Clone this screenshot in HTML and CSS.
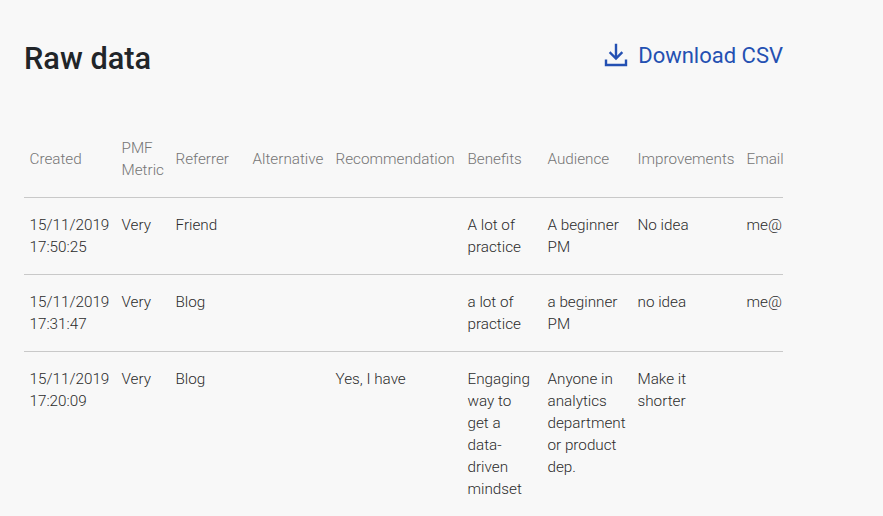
FILE: index.html
```html
<!DOCTYPE html>
<html lang="en">
<head>
<meta charset="utf-8">
<title>Raw data</title>
<link rel="stylesheet" href="styles.css">
</head>
<body>
<main class="page">
  <header class="head">
    <h1 class="title">Raw data</h1>
    <a class="download" href="#">
      <svg class="icon" viewBox="0 0 24 24" fill="none" stroke="currentColor" stroke-width="2.4" stroke-linecap="square" stroke-linejoin="miter"><path d="M12 2v13M6.500 10l5.500 5.500L17.500 10"/><path d="M2 16.500V22h20v-5.500" stroke-linecap="butt"/></svg>
      <span class="download-label">Download CSV</span>
    </a>
  </header>
  <div class="scroller">
    <table class="data">
      <colgroup>
        <col class="c1"><col class="c2"><col class="c3"><col class="c4"><col class="c5"><col class="c6"><col class="c7"><col class="c8"><col class="c9">
      </colgroup>
      <thead>
        <tr><th>Created</th><th>PMF Metric</th><th>Referrer</th><th>Alternative</th><th>Recommendation</th><th>Benefits</th><th>Audience</th><th>Improvements</th><th>Email</th></tr>
      </thead>
      <tbody>
        <tr><td>15/11/2019 17:50:25</td><td>Very</td><td>Friend</td><td></td><td></td><td>A lot of practice</td><td>A beginner PM</td><td>No idea</td><td>me@</td></tr>
        <tr><td>15/11/2019 17:31:47</td><td>Very</td><td>Blog</td><td></td><td></td><td>a lot of practice</td><td>a beginner PM</td><td>no idea</td><td>me@</td></tr>
        <tr><td>15/11/2019 17:20:09</td><td>Very</td><td>Blog</td><td></td><td>Yes, I have</td><td class="narrow">Engaging way to get a data-driven mindset</td><td>Anyone in analytics department or product dep.</td><td>Make it shorter</td><td></td></tr>
      </tbody>
    </table>
  </div>
</main>
</body>
</html>
```
FILE: styles.css
```css
html, body { margin: 0; height: 100%; overflow: hidden; }
body { background: #f8f8f8; font-family: Roboto, "Liberation Sans", sans-serif; color: #333; }
.page { width: 759px; padding: 0 0 0 24px; }
.head { display: flex; justify-content: space-between; align-items: center; height: 116px; }
.title { margin: 0; font-size: 30.750px; font-weight: 500; color: #212529; line-height: 36px; padding-top: 1px; }
.download { display: flex; align-items: center; gap: 10px; color: #2450b2; text-decoration: none; font-size: 22px; line-height: 28px; margin-top: -6px; }
.download-label { margin-top: 2px; }
.icon { width: 24px; height: 24px; display: block; }
.scroller { overflow: hidden; margin-top: 5px; }
.data { border-collapse: collapse; table-layout: fixed; width: 780px; font-size: 15.250px; font-weight: 300; line-height: 22px; margin-left: -0.500px; }
.c1 { width: 92px; } .c2 { width: 54px; } .c3 { width: 77px; } .c4 { width: 83px; }
.c5 { width: 132px; } .c6 { width: 80px; } .c7 { width: 90px; } .c8 { width: 109px; } .c9 { width: 63px; }
th, td { padding: 16px 6px; text-align: left; vertical-align: top; overflow-wrap: normal; }
th { font-weight: 300; color: #757575; vertical-align: middle; border-bottom: 1px solid #c9c9c9; }
td { color: #2b2b2b; border-bottom: 1px solid #c9c9c9; }
td.narrow { padding-right: 10px; }
```
